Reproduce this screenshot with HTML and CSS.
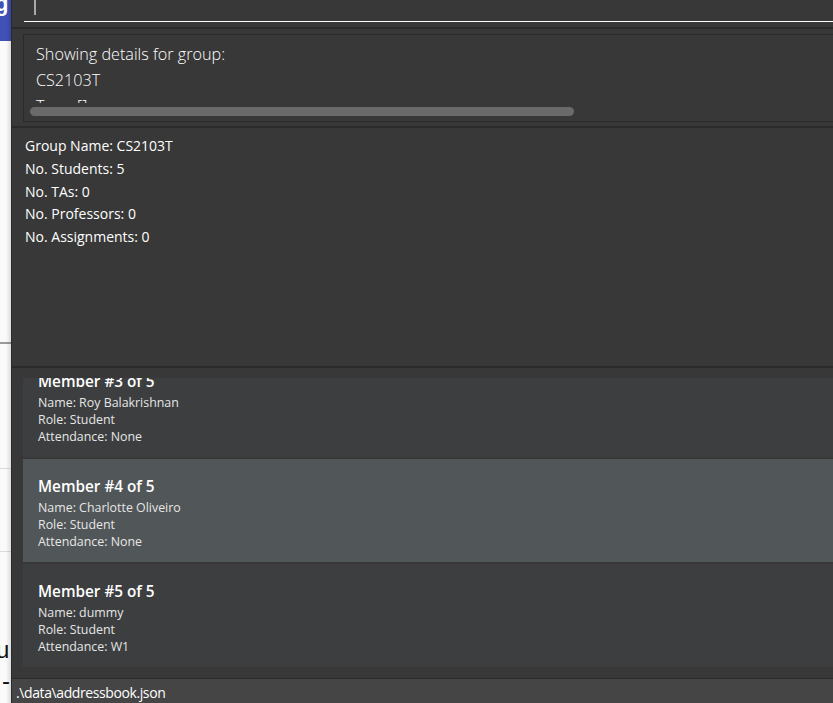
FILE: index.html
```html
<!DOCTYPE html>
<html>
<head>
<meta charset="utf-8">
<link rel="stylesheet" href="styles.css">
</head>
<body>
<div class="desktop">
  <div class="behind">
    <div class="behind-header"><span class="behind-logo">g</span></div>
    <div class="behind-rule rule-a"></div>
    <div class="behind-rule rule-b"></div>
    <div class="behind-rule rule-c"></div>
    <span class="behind-char char-u">u</span>
    <span class="behind-char char-dash">-</span>
    <div class="behind-shadow"></div>
  </div>
  <div class="app">
    <div class="command-box">
      <div class="command-field"><span class="caret"></span></div>
    </div>
    <div class="divider"></div>
    <div class="result-pane">
      <div class="result-box">
        <div class="result-text">
          <p>Showing details for group:</p>
          <p>CS2103T</p>
          <p>Tags: []</p>
        </div>
        <div class="hscroll"><div class="thumb"></div></div>
      </div>
    </div>
    <div class="divider"></div>
    <div class="group-pane">
      <p>Group Name: CS2103T</p>
      <p>No. Students: 5</p>
      <p>No. TAs: 0</p>
      <p>No. Professors: 0</p>
      <p>No. Assignments: 0</p>
    </div>
    <div class="divider"></div>
    <div class="list-pane">
      <div class="list-viewport">
        <div class="list-inner">
          <div class="card even">
            <div class="card-title">Member #3 of 5</div>
            <div class="card-line">Name: Roy Balakrishnan</div>
            <div class="card-line">Role: Student</div>
            <div class="card-line">Attendance: None</div>
          </div>
          <div class="card odd">
            <div class="card-title">Member #4 of 5</div>
            <div class="card-line">Name: Charlotte Oliveiro</div>
            <div class="card-line">Role: Student</div>
            <div class="card-line">Attendance: None</div>
          </div>
          <div class="card even">
            <div class="card-title">Member #5 of 5</div>
            <div class="card-line">Name: dummy</div>
            <div class="card-line">Role: Student</div>
            <div class="card-line">Attendance: W1</div>
          </div>
        </div>
      </div>
    </div>
    <div class="status-bar">.\data\addressbook.json</div>
  </div>
</div>
</body>
</html>
```
FILE: styles.css
```css
* { box-sizing: border-box; }
html, body { margin: 0; padding: 0; }
body {
  width: 833px;
  height: 703px;
  overflow: hidden;
  font-family: "Open Sans", "Noto Sans", sans-serif;
  background: #383838;
}
p { margin: 0; }

.desktop {
  display: flex;
  width: 833px;
  height: 703px;
}

/* window behind, only a sliver visible */
.behind {
  position: relative;
  width: 11px;
  flex: 0 0 11px;
  height: 703px;
  background: #fafafa;
  overflow: hidden;
}
.behind-header {
  height: 41px;
  background: #3f51b5;
  position: relative;
}
.behind-logo {
  position: absolute;
  left: -5px;
  top: -9px;
  font-family: "Liberation Sans", sans-serif;
  font-weight: bold;
  font-size: 22px;
  color: #ffffff;
}
.behind-rule {
  position: absolute;
  left: 0;
  right: 0;
  height: 1px;
}
.rule-a { top: 342px; height: 2px; background: #9a9a9a; }
.rule-b { top: 468px; background: #dcdcdc; }
.rule-c { top: 551px; background: #dcdcdc; }
.behind-char {
  position: absolute;
  font-family: "Liberation Sans", sans-serif;
  font-size: 24px;
  color: #111;
  line-height: 1;
}
.char-u { left: -4px; top: 638px; }
.char-dash { left: 2px; top: 669px; }
.behind-shadow {
  position: absolute;
  top: 0;
  right: 0;
  width: 5px;
  height: 100%;
  background: linear-gradient(to right, rgba(0,0,0,0), rgba(0,0,0,0.12));
}

/* application window */
.app {
  flex: 1;
  display: flex;
  flex-direction: column;
  height: 703px;
  background: #383838;
  border-left: 1px solid #2b2b2b;
  min-width: 0;
}

.command-box {
  height: 27px;
  flex: 0 0 27px;
  padding-left: 12px;
}
.command-field {
  height: 22px;
  border-bottom: 1px solid #ffffff;
  padding-left: 10px;
}
.caret {
  display: block;
  width: 2px;
  height: 15px;
  background: #a8a8a8;
}

.divider {
  height: 2px;
  flex: 0 0 2px;
  background: #2b2b2b;
}

.result-pane {
  height: 97px;
  flex: 0 0 97px;
  padding: 5px 0 4px 11px;
}
.result-box {
  height: 88px;
  border: 1px solid #2b2b2b;
  border-right: none;
  display: flex;
  flex-direction: column;
}
.result-text {
  height: 68px;
  overflow: hidden;
  padding: 6px 0 0 12px;
  color: #ffffff;
  font-weight: 300;
  font-size: 16.2px;
  line-height: 26px;
}
.hscroll {
  height: 16px;
  padding: 4px 0 0 6px;
}
.thumb {
  width: 544px;
  height: 9px;
  background: #6a6a6a;
  border-radius: 5px;
}

.group-pane {
  height: 238px;
  flex: 0 0 238px;
  padding: 7px 0 0 13px;
  color: #ffffff;
  font-size: 14px;
  line-height: 22.75px;
}

.list-pane {
  flex: 0 0 310px;
  height: 310px;
  padding: 10px 0 10px 11px;
}
.list-viewport {
  height: 290px;
  overflow: hidden;
}
.list-inner {
  margin-top: -24px;
  display: flex;
  flex-direction: column;
  gap: 2px;
}
.card {
  height: 103px;
  padding: 16px 0 0 15px;
  color: #ffffff;
}
.card.even { background: #3c3e3f; }
.card.odd { background: #515658; }
.card-title {
  font-size: 15.3px;
  font-weight: 600;
  line-height: 22px;
  margin-bottom: 2px;
}
.card-line {
  font-size: 12.4px;
  line-height: 17px;
  color: #e6e6e6;
}

.status-bar {
  flex: 1;
  border-top: 1px solid #2b2b2b;
  background: #454545;
  color: #ffffff;
  font-size: 14px;
  letter-spacing: -0.4px;
  line-height: 23px;
  padding: 2px 0 0 4px;
  white-space: nowrap;
}
```
